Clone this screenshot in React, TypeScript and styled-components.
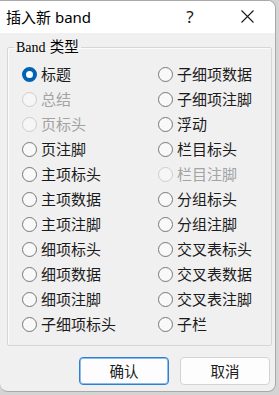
import React from 'react';
import styled, { createGlobalStyle } from 'styled-components';

const GlobalStyle = createGlobalStyle`
    html, body {
        margin: 0;
        padding: 0;
        background: #d4d4d4;
    }
    body {
        font-family: "Noto Sans", "Noto Sans CJK SC", sans-serif;
    }
`;

const Window = styled.div`
    width: 276px;
    height: 392px;
    box-sizing: border-box;
    border: 1px solid #a9a9a9;
    border-left: none;
    border-radius: 0 8px 8px 8px;
    background: #f0f0f0;
    overflow: hidden;
    display: flex;
    flex-direction: column;
`;

const TitleBar = styled.div`
    height: 32px;
    flex: none;
    display: flex;
    align-items: center;
    background: #ffffff;
    padding-left: 6px;
    font-size: 15px;
    color: #000;
    font-family: "Noto Sans", "Noto Sans CJK SC", sans-serif;
`;

const Title = styled.span`
    flex: 1;
    margin-top: -2px;
`;

const TitleButton = styled.span<{ $w: number; $mr: number }>`
    width: ${(p) => p.$w}px;
    margin-right: ${(p) => p.$mr}px;
    display: flex;
    justify-content: center;
    align-items: center;
    margin-top: -2px;
    font-size: 17px;
    color: #1a1a1a;
`;

const Group = styled.fieldset`
    margin: 4px 3px 0 7px;
    padding: 5px 0 8px 0;
    border: 1px solid #d6d6d6;
    border-radius: 2px;
    box-shadow: inset 1px 1px 0 #fbfbfb;
`;

const Legend = styled.legend`
    margin-left: 6px;
    padding: 0 2px;
    line-height: 18px;
    color: #000;
`;

const LegendLatin = styled.span`
    font-family: "Liberation Serif", "DejaVu Serif", serif;
    font-size: 14px;
`;

const LegendCjk = styled.span`
    font-family: "Noto Sans CJK SC", sans-serif;
    font-size: 14.5px;
`;

const Grid = styled.div`
    display: grid;
    grid-template-columns: 136px 1fr;
    grid-auto-flow: column;
    grid-template-rows: repeat(11, 25px);
`;

const Option = styled.label<{ $disabled?: boolean }>`
    display: flex;
    align-items: center;
    gap: 4px;
    padding-left: 14px;
    font-family: "Noto Sans CJK SC", sans-serif;
    font-size: 15px;
    color: ${(p) => (p.$disabled ? '#a3a3a3' : '#1b1b1b')};
`;

const Dot = styled.span<{ $checked?: boolean; $disabled?: boolean }>`
    width: 15px;
    height: 15px;
    box-sizing: border-box;
    border-radius: 50%;
    flex: none;
    border: ${(p) => (p.$checked ? '4.5px solid #0063b8' : p.$disabled ? '1px solid #cdcdcd' : '1px solid #777777')};
    background: ${(p) => (p.$checked ? '#ffffff' : p.$disabled ? '#f6f6f6' : '#f9f9f9')};
`;

const Label = styled.span`
    line-height: 20px;
    margin-top: -1px;
`;

const Footer = styled.div`
    display: flex;
    justify-content: flex-end;
    gap: 11px;
    padding: 11px 5px 0 0;
`;

const Button = styled.button<{ $primary?: boolean }>`
    width: 90px;
    height: 28px;
    box-sizing: border-box;
    border-radius: 4px;
    border: 1px solid ${(p) => (p.$primary ? '#2b7fd4' : '#d3d3d3')};
    box-shadow: ${(p) => (p.$primary ? 'inset 0 0 0 1px #8ebbe8' : 'none')};
    background: #fdfdfd;
    font-family: "Noto Sans CJK SC", sans-serif;
    font-size: 14.5px;
    line-height: 20px;
    color: #1b1b1b;
    padding: 0;
`;

type Item = { text: string; checked?: boolean; disabled?: boolean };

const items: Item[] = [
    { text: '标题', checked: true },
    { text: '总结', disabled: true },
    { text: '页标头', disabled: true },
    { text: '页注脚' },
    { text: '主项标头' },
    { text: '主项数据' },
    { text: '主项注脚' },
    { text: '细项标头' },
    { text: '细项数据' },
    { text: '细项注脚' },
    { text: '子细项标头' },
    { text: '子细项数据' },
    { text: '子细项注脚' },
    { text: '浮动' },
    { text: '栏目标头' },
    { text: '栏目注脚', disabled: true },
    { text: '分组标头' },
    { text: '分组注脚' },
    { text: '交叉表标头' },
    { text: '交叉表数据' },
    { text: '交叉表注脚' },
    { text: '子栏' },
];

export default function App(): JSX.Element {
    return (
        <>
            <GlobalStyle />
            <Window>
                <TitleBar>
                    <Title>插入新 band</Title>
                    <TitleButton $w={42} $mr={13}>?</TitleButton>
                    <TitleButton $w={46} $mr={5}>
                        <svg width="13" height="13" viewBox="0 0 13 13">
                            <path d="M0.5 0.5 L12.5 12.5 M12.5 0.5 L0.5 12.5" stroke="#1a1a1a" strokeWidth="1.1" fill="none" />
                        </svg>
                    </TitleButton>
                </TitleBar>
                <Group>
                    <Legend>
                        <LegendLatin>Band</LegendLatin> <LegendCjk>类型</LegendCjk>
                    </Legend>
                    <Grid>
                        {items.map((it) => (
                            <Option key={it.text} $disabled={it.disabled}>
                                <Dot $checked={it.checked} $disabled={it.disabled} />
                                <Label>{it.text}</Label>
                            </Option>
                        ))}
                    </Grid>
                </Group>
                <Footer>
                    <Button $primary>确认</Button>
                    <Button>取消</Button>
                </Footer>
            </Window>
        </>
    );
}
